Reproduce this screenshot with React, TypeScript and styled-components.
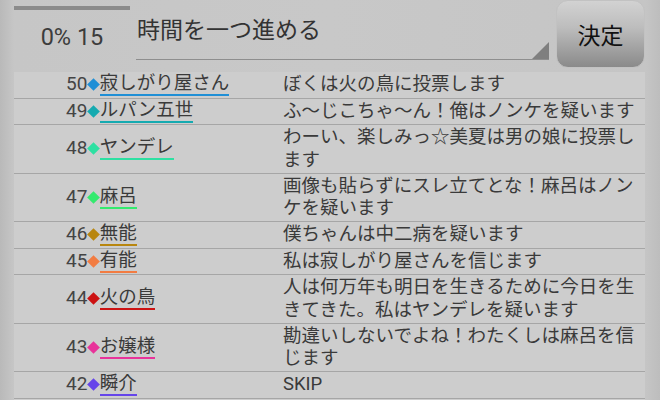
import React from "react";
import styled, { createGlobalStyle } from "styled-components";

const GlobalStyle = createGlobalStyle`
  html, body { margin: 0; padding: 0; }
  body {
    width: 660px;
    height: 400px;
    overflow: hidden;
    font-family: Roboto, "Noto Sans CJK JP", "Noto Sans", sans-serif;
    background: linear-gradient(to right, #b9b9b9 0px, #c6c6c6 14px, #c8c8c8 50%, #c5c5c5 646px, #bdbdbd 660px);
  }
`;

const Screen = styled.div`
  display: flex;
  flex-direction: column;
  padding: 0 15px 0 14px;
  height: 400px;
`;

const Header = styled.div`
  display: flex;
  align-items: flex-start;
  height: 72px;
  flex-shrink: 0;
`;

const Status = styled.div`
  width: 116px;
  display: flex;
  flex-direction: column;
  align-items: center;
  margin-right: 6px;
`;

const Progress = styled.div`
  width: 100%;
  height: 4px;
  margin-top: 6px;
  background: #8b8b8b;
`;

const StatusText = styled.div`
  margin-top: 11px;
  font-size: 23.5px;
  line-height: 32px;
  color: #3c3c3c;
`;

const Select = styled.div`
  flex: 1;
  position: relative;
  height: 60px;
  border-bottom: 1px solid #8e8e8e;
  box-sizing: border-box;
  padding: 15px 0 0 1px;
  font-size: 23px;
  line-height: 32px;
  color: #333;
`;

const Caret = styled.div`
  position: absolute;
  right: 0;
  bottom: 0;
  width: 0;
  height: 0;
  border-left: 17px solid transparent;
  border-bottom: 17px solid #7f7f7f;
`;

const Button = styled.div`
  width: 89px;
  height: 68px;
  margin-left: 7px;
  border-radius: 12px;
  box-sizing: border-box;
  border: 1px solid #c2c2c2;
  background: linear-gradient(to bottom, #d2d2d2 0%, #bdbdbd 40%, #8a8a8a 100%);
  display: flex;
  align-items: center;
  justify-content: center;
  font-size: 23px;
  color: #111;
  padding-bottom: 1px;
`;

const Table = styled.div`
  display: flex;
  flex-direction: column;
  background: #cdcdcd;
  flex: 1;
`;

const Row = styled.div`
  display: grid;
  grid-template-columns: 269px 1fr;
  border-bottom: 1px solid #a6a6a6;
  padding: 1px 0 1.5px;
  font-size: 18.5px;
  line-height: 22.5px;
  color: #3a3a3a;
`;

const Who = styled.div`
  display: flex;
  align-items: center;
  padding-left: 52px;
`;

const Num = styled.span`
  color: #444;
  font-size: 19px;
`;

const Diamond = styled.span<{ $c: string }>`
  display: inline-block;
  width: 9px;
  height: 9px;
  margin: 0 1.5px 0 2px;
  background: ${(p) => p.$c};
  transform: rotate(45deg);
`;

const Name = styled.span<{ $c: string }>`
  display: inline-block;
  color: #3a3a3a;
  border-bottom: 2px solid ${(p) => p.$c};
  line-height: 21px;
`;

const Msg = styled.div`
  padding-right: 4px;
`;

const rows = [
  { n: 50, c: "#1f8fd6", name: "寂しがり屋さん", msg: "ぼくは火の鳥に投票します" },
  { n: 49, c: "#15aab0", name: "ルパン五世", msg: "ふ〜じこちゃ〜ん！俺はノンケを疑います" },
  { n: 48, c: "#2ee0a2", name: "ヤンデレ", msg: "わーい、楽しみっ☆美夏は男の娘に投票します" },
  { n: 47, c: "#34ea6e", name: "麻呂", msg: "画像も貼らずにスレ立てとな！麻呂はノンケを疑います" },
  { n: 46, c: "#b8860f", name: "無能", msg: "僕ちゃんは中二病を疑います" },
  { n: 45, c: "#f27c42", name: "有能", msg: "私は寂しがり屋さんを信じます" },
  { n: 44, c: "#cc1212", name: "火の鳥", msg: "人は何万年も明日を生きるために今日を生きてきた。私はヤンデレを疑います" },
  { n: 43, c: "#e8339a", name: "お嬢様", msg: "勘違いしないでよね！わたくしは麻呂を信じます" },
  { n: 42, c: "#6545ea", name: "瞬介", msg: "SKIP" },
];

export default function App() {
  return (
    <>
      <GlobalStyle />
      <Screen>
        <Header>
          <Status>
            <Progress />
            <StatusText>0% 15</StatusText>
          </Status>
          <Select>
            時間を一つ進める
            <Caret />
          </Select>
          <Button>決定</Button>
        </Header>
        <Table>
          {rows.map((r) => (
            <Row key={r.n}>
              <Who>
                <Num>{r.n}</Num>
                <Diamond $c={r.c} />
                <Name $c={r.c}>{r.name}</Name>
              </Who>
              <Msg>{r.msg}</Msg>
            </Row>
          ))}
        </Table>
      </Screen>
    </>
  );
}
